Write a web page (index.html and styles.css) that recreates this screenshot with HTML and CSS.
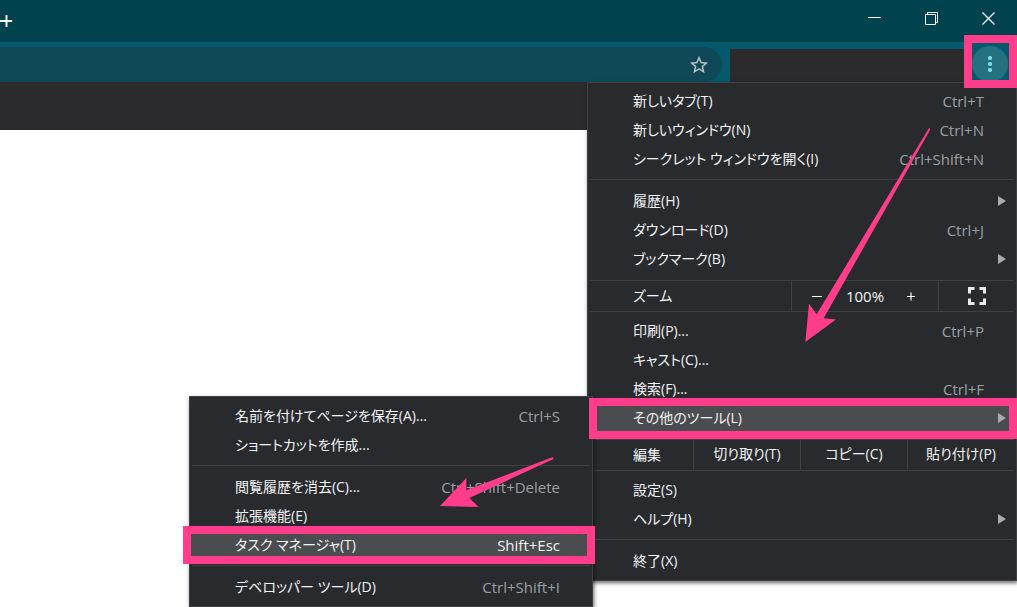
FILE: index.html
```html
<!DOCTYPE html>
<html lang="ja">
<head>
<meta charset="utf-8">
<title>メニュー</title>
<link rel="stylesheet" href="styles.css">
</head>
<body>
<div class="browser">
  <header class="titlebar">
    <button class="new-tab" aria-label="新しいタブ"><svg width="16" height="16" viewBox="0 0 16 16"><path d="M0 8h15M8 .5v15" stroke="#fff" stroke-width="2.300"/></svg></button>
    <div class="window-controls">
      <button aria-label="最小化"><svg width="13" height="14"><path d="M0 6.500h13" stroke="#fff"/></svg></button>
      <button aria-label="元に戻す"><svg width="13" height="13" fill="none" stroke="#fff"><path d="M.5 2.500h10v10H.5zM2.500 2V.5h10v10H11"/></svg></button>
      <button aria-label="閉じる"><svg width="13" height="13" fill="none" stroke="#fff" stroke-width="1.300"><path d="M.5 .5l12 12M12.500 .5l-12 12"/></svg></button>
    </div>
  </header>
  <div class="toolbar">
    <div class="omnibox">
      <button aria-label="ブックマークに追加"><svg width="22" height="22" viewBox="0 0 24 24" fill="#bfc3c7"><path d="M22 9.240l-7.190-.62L12 2 9.190 8.630 2 9.240l5.460 4.730L5.820 21 12 17.270 18.180 21l-1.630-7.030L22 9.240zM12 15.400l-3.760 2.270 1-4.280-3.320-2.880 4.380-.38L12 6.100l1.710 4.040 4.380.38-3.320 2.880 1 4.280L12 15.400z"/></svg></button>
    </div>
    <div class="extensions"></div>
    <div class="more-box">
      <button class="more" aria-label="メニュー"><svg width="6" height="18" fill="#83e4e8"><circle cx="3" cy="3" r="2.100"/><circle cx="3" cy="9" r="2.100"/><circle cx="3" cy="15" r="2.100"/></svg></button>
    </div>
  </div>
  <div class="bookmarks"></div>
  <main class="page"></main>

  <div class="menu main-menu">
    <button class="item">新しいタブ(T)<kbd>Ctrl+T</kbd></button>
    <button class="item">新しいウィンドウ(N)<kbd>Ctrl+N</kbd></button>
    <button class="item">シークレット ウィンドウを開く(I)<kbd>Ctrl+Shift+N</kbd></button>
    <hr>
    <button class="item sub">履歴(H)</button>
    <button class="item">ダウンロード(D)<kbd>Ctrl+J</kbd></button>
    <button class="item sub">ブックマーク(B)</button>
    <div class="strip">
      <span class="strip-label">ズーム</span>
      <div class="zoom">
        <button aria-label="縮小"><svg width="11" height="11"><path d="M0 5.500h10" stroke="#fff"/></svg></button>
        <span class="level">100%</span>
        <button aria-label="拡大"><svg width="9" height="9"><path d="M0 4.500h8M4 .5v8" stroke="#fff" stroke-width="1.200"/></svg></button>
      </div>
      <button class="fullscreen" aria-label="全画面表示"><svg width="18" height="18" fill="none" stroke="#e8eaed" stroke-width="3"><path d="M1.500 6.500v-5h5M11.500 1.500h5v5M16.500 11.500v5h-5M6.500 16.500h-5v-5"/></svg></button>
    </div>
    <button class="item">印刷(P)...<kbd>Ctrl+P</kbd></button>
    <button class="item">キャスト(C)...</button>
    <button class="item">検索(F)...<kbd>Ctrl+F</kbd></button>
    <div class="more-tools">
      <button class="item sub active">その他のツール(L)</button>
      <div class="menu submenu">
        <button class="item">名前を付けてページを保存(A)...<kbd>Ctrl+S</kbd></button>
        <button class="item">ショートカットを作成...</button>
        <hr>
        <button class="item">閲覧履歴を消去(C)...<kbd>Ctrl+Shift+Delete</kbd></button>
        <button class="item">拡張機能(E)</button>
        <button class="item active">タスク マネージャ(T)<kbd>Shift+Esc</kbd></button>
        <hr>
        <button class="item">デベロッパー ツール(D)<kbd>Ctrl+Shift+I</kbd></button>
      </div>
    </div>
    <div class="strip edit">
      <span class="strip-label">編集</span>
      <button>切り取り(T)</button>
      <button>コピー(C)</button>
      <button>貼り付け(P)</button>
    </div>
    <button class="item">設定(S)</button>
    <button class="item sub">ヘルプ(H)</button>
    <hr>
    <button class="item">終了(X)</button>
    <svg class="arrows" width="500" height="400" viewBox="430 120 500 400" fill="#ff3d8b" aria-hidden="true">
      <path d="M929 128L930.500 129L823.700 318.300L836 319.500L805.300 342L809 303.700L816.700 314.300Z"/>
      <path d="M553 457L553.500 459L469.300 498L478.700 507L440 506L466.300 478V490.300Z"/>
    </svg>
  </div>
</div>
</body>
</html>
```
FILE: styles.css
```css
* { box-sizing: border-box; }

body {
  margin: 0;
  overflow: hidden;
  font: 14px/20px "Open Sans", "Noto Sans CJK JP", sans-serif;
  font-feature-settings: "palt";
  color: #f1f3f4;
}

button {
  display: flex;
  align-items: center;
  justify-content: center;
  margin: 0;
  padding: 0;
  border: 0;
  background: none;
  color: inherit;
  font: inherit;
  font-feature-settings: inherit;
  white-space: nowrap;
}

svg { display: block; }

.browser {
  position: relative;
  display: flex;
  flex-direction: column;
  min-height: 100vh;
  overflow: hidden;
  background: #fff;
}

.titlebar {
  display: flex;
  justify-content: space-between;
  height: 42px;
  background: #00434f;
}

.new-tab {
  width: 13px;
  height: 42px;
  justify-content: flex-end;
}

.window-controls {
  display: flex;
  align-items: center;
  height: 36px;
}

.window-controls button { width: 57px; height: 36px; }

.toolbar {
  display: flex;
  height: 40px;
  background: #045a6c;
}

.omnibox {
  display: flex;
  flex: 1;
  justify-content: flex-end;
  margin: 5px 8px 0 0;
  padding-right: 12px;
  border-radius: 0 18px 18px 0;
  background: #0f4856;
}

.extensions {
  width: 234px;
  margin-top: 7px;
  background: #2b2b2d;
}

.more-box {
  position: relative;
  z-index: 3;
  width: 53px;
  height: 53px;
  margin-top: -7px;
  border: 8px solid #ff3d8b;
  background: #045a6c;
  display: flex;
  align-items: center;
  overflow: hidden;
}

.more {
  flex: none;
  width: 36px;
  height: 36px;
  margin-top: 5px;
  border-radius: 50%;
  background: #25717f;
}

.bookmarks { height: 48px; background: #2b2b2d; }

.page { flex: 1; }

.menu {
  position: absolute;
  padding: 4px 0;
  border: 1px solid #3f4144;
  background: #292a2d;
  box-shadow: 1px 2px 4px rgba(0, 0, 0, .6);
}

.main-menu {
  z-index: 2;
  top: 82px;
  right: 0;
  width: 430px;
}

.submenu {
  z-index: 1;
  top: -8px;
  right: calc(100% - 5px);
  width: 404px;
  padding-top: 5px;
}

.menu hr {
  height: 1px;
  margin: 5px 2px 7px;
  border: 0;
  background: #3f4144;
}

.item {
  position: relative;
  justify-content: space-between;
  width: 100%;
  height: 29px;
  padding: 0 32px 2px 45px;
}

kbd {
  color: #9aa0a6;
  font: inherit;
  font-size: 15px;
}

.active { background: #4b4c4f; }

.active kbd { color: #f1f3f4; }

.active::before {
  content: "";
  position: absolute;
  z-index: 2;
  inset: -6px -1px -6px 1px;
  border: 8px solid #ff3d8b;
}

.submenu .active::before { inset: -5px -3px -4px -7px; }

.sub::after {
  content: "";
  position: absolute;
  top: 9px;
  right: 10px;
  border: solid transparent;
  border-width: 5px 0 5px 8px;
  border-left-color: #a9abae;
}

.more-tools { position: relative; }

.strip {
  display: flex;
  height: 32px;
  margin: 6px 2px 5px;
  border: solid #3f4144;
  border-width: 1px 0;
}

.strip > * { border-left: 1px solid #3f4144; }

.strip .strip-label {
  flex: 1;
  padding: 5px 0 0 43px;
  border: 0;
}

.zoom {
  display: flex;
  align-items: center;
  justify-content: space-between;
  width: 147px;
  padding: 0 22px 0 20px;
}

.level { width: 56px; font-size: 15px; text-align: center; }

.strip .fullscreen { width: 76px; }

.edit > button { width: 107px; padding-bottom: 2px; }

.arrows {
  position: absolute;
  z-index: 3;
  top: 37px;
  right: 86px;
  pointer-events: none;
}
```
